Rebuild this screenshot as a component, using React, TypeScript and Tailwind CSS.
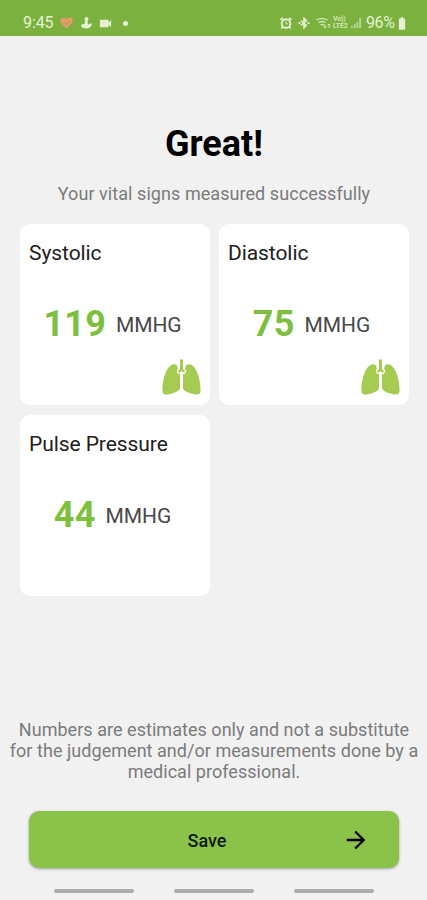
import React from "react";
import { MdArrowForward, MdBatteryFull, MdVideocam } from "react-icons/md";

type Vital = {
  title: string;
  value: number;
  unit: string;
  hasIcon: boolean;
};

const vitals: Vital[] = [
  { title: "Systolic", value: 119, unit: "MMHG", hasIcon: true },
  { title: "Diastolic", value: 75, unit: "MMHG", hasIcon: true },
  { title: "Pulse Pressure", value: 44, unit: "MMHG", hasIcon: false },
];

function LungsIcon() {
  return (
    <svg className="absolute right-[9px] bottom-[10px] h-9 w-[39px]" viewBox="0 0 39 36" fill="#a5cb50">
      {/* Windpipe */}
      <path d="M18 1.500c0-1.700 3-1.700 3 0v8.500l2.200 2.500-1.200 1.300-2.500-1.500-2.500 1.500-1.200-1.300L18 10z" />
      {/* Left lobe */}
      <path d="M11.800 5.200c2.200 0 3.600 1 3.800 3.200l.2 1.700-1.200 2.400 2 2.700 1.400-.8v13.800c0 2-.8 2.900-2.600 4-3 1.900-7.800 3.300-11.200 3.300C1.400 35.500.4 34.100.4 31 .4 19.500 5.300 5.200 11.800 5.200z" />
      {/* Right lobe */}
      <path d="M27.200 5.200c-2.200 0-3.600 1-3.800 3.200l-.2 1.700 1.200 2.400-2 2.700-1.400-.8v13.800c0 2 .8 2.900 2.600 4 3 1.900 7.800 3.300 11.200 3.300 2.800 0 3.800-1.400 3.800-4.500C38.600 19.500 33.700 5.200 27.200 5.200z" />
    </svg>
  );
}

function StatusBar() {
  return (
    <header className="flex h-9 items-center justify-between bg-[#7cb13f] pt-[10px] pr-[21px] pl-[23px] text-[#e3f3d2]">
      <div className="flex items-center">
        <span className="w-[31px] text-[16px] leading-5 tracking-[-0.1px]">9:45</span>
        {/* Health */}
        <svg className="ml-[6px] h-3 w-[13px]" viewBox="0 0 13 12">
          <path d="M6.500 11.500 1.200 6.200C-.8 3.500.8.700 3.400.700c1.500 0 2.500.8 3.100 1.900C7.100 1.500 8.100.700 9.600.700c2.600 0 4.200 2.800 2.200 5.500z" fill="#e99a68" />
          <path d="m3.500 5 2.700 2.500L9.800 4" fill="none" stroke="#a9a451" strokeWidth="1.200" />
        </svg>
        {/* Activity */}
        <svg className="ml-[8px] h-3 w-[11px]" viewBox="0 0 11 12" fill="currentColor">
          <circle cx="5.500" cy="2" r="2" />
          <path d="M4 3.500h3L6.500 6l1 1.500L10.500 6c.5 3-1.500 5.500-5 5.500C2.500 11.500.2 10.500.2 8.800S2 7 3.500 7z" />
        </svg>
        <MdVideocam className="ml-[6px] h-[15px] w-[15px]" />
        <span className="ml-[10px] h-[5px] w-[5px] rounded-full bg-current" />
      </div>
      <div className="flex items-center">
        {/* Alarm */}
        <svg className="h-3 w-3" viewBox="0 0 12 12" fill="none" stroke="currentColor">
          <circle cx="6" cy="6.500" r="4.300" strokeWidth="1.900" />
          <path d="M.5 2.800 3 .8M11.500 2.800 9 .8M2.500 10l-1.200 1.500M9.500 10l1.200 1.500" strokeWidth="1.700" />
          <path d="M6 4.500v2.300h1.800" />
        </svg>
        {/* Bluetooth */}
        <svg className="ml-[6px] h-3 w-3" viewBox="0 0 12 12" fill="none" stroke="currentColor" strokeWidth="1.500">
          <path d="m2.800 3.500 5.600 4.700L6 10.800V1.200l2.400 2.600-5.600 4.700" />
          <path d="M.5 6h2M9.500 6h2" strokeWidth="1.800" />
        </svg>
        {/* Wi-Fi */}
        <svg className="ml-[6px] h-3 w-[15px] opacity-80" viewBox="0 0 15 12" fill="none" stroke="currentColor" strokeWidth="1.300">
          <path d="M.5 3Q6 0 11.500 3M2.500 5.500Q6 3.500 9.500 5.500M4.500 8Q6 7 8 8" />
          <path d="M9 7v4M7.500 9.500 9 11l1.500-1.500M13 11V7m-1.500 1.500L13 7l1.500 1.500" strokeWidth="1" />
        </svg>
        <span className="ml-[2px] flex w-[17px] flex-col text-[7px] leading-[7px] font-bold tracking-[-0.2px] opacity-80">
          <span>Vo))</span>
          <span>LTE2</span>
        </span>
        {/* Signal */}
        <svg className="ml-[1px] h-[10px] w-[11px] opacity-60" viewBox="0 0 12 11" fill="currentColor">
          <path d="M0 9h2v2H0zM3 7h2v4H3zM6 4h2v7H6zM9 0h2v11H9z" />
        </svg>
        <span className="ml-[4px] w-[30px] text-[16px] leading-5 tracking-[-0.4px]">96%</span>
        <MdBatteryFull className="-mr-[4px] -ml-[2px] h-[15px] w-[16px]" />
      </div>
    </header>
  );
}

function VitalCard({ title, value, unit, hasIcon }: Vital) {
  return (
    <div className="relative h-[181px] rounded-[10px] bg-white">
      <h2 className="px-[9px] pt-4 text-[21px] leading-[26px] tracking-[-0.07px] text-[#202020]">{title}</h2>
      <div className="mt-[37px] flex items-center justify-center gap-[10px] pr-[5px] leading-10">
        <span className="text-[36px] font-bold tracking-[0.2px] text-[#7fbf3f]">{value}</span>
        <span className="pt-[2px] text-[21px] tracking-[-0.1px] text-[#484848]">{unit}</span>
      </div>
      {hasIcon && <LungsIcon />}
    </div>
  );
}

export default function App() {
  return (
    <div className="flex h-[900px] w-[427px] flex-col bg-[#f1f1f1] font-['Roboto',sans-serif]">
      <StatusBar />

      <main className="flex flex-1 flex-col">
        <h1 className="mt-[87px] pl-[1px] text-center text-[36px] leading-[42px] font-bold text-black">Great!</h1>
        <p className="mt-[18px] pl-[1px] text-center text-[18px] leading-[22px] tracking-[0.06px] text-[#7b7b7b]">
          Your vital signs measured successfully
        </p>

        <section className="mt-[19px] mr-[18px] ml-5 grid grid-cols-2 gap-x-[9px] gap-y-[10px]">
          {vitals.map((vital) => (
            <VitalCard key={vital.title} {...vital} />
          ))}
        </section>

        <p className="mt-auto pl-[1px] text-center text-[18px] leading-[21px] tracking-[0.04px] text-[#7b7b7b]">
          Numbers are estimates only and not a substitute
          <br />
          for the judgement and/or measurements done by a
          <br />
          medical professional.
        </p>

        <button className="relative mt-[29px] mr-7 ml-[29px] flex h-[57px] shrink-0 items-center justify-center rounded-[10px] bg-[#8bc34a] pt-[1px] pr-[14px] text-[18px] font-medium text-[#101a06] shadow-[0_1px_3px_rgba(0,0,0,0.35)]">
          Save
          <MdArrowForward className="absolute top-[15px] right-[29px] h-7 w-7 text-black" />
        </button>
      </main>

      {/* System navigation hints */}
      <nav className="flex h-8 items-start justify-center gap-10 pt-[21px]">
        <span className="h-1 w-[80px] rounded-full bg-[#acacac]" />
        <span className="h-1 w-[80px] rounded-full bg-[#acacac]" />
        <span className="h-1 w-[80px] rounded-full bg-[#acacac]" />
      </nav>
    </div>
  );
}
